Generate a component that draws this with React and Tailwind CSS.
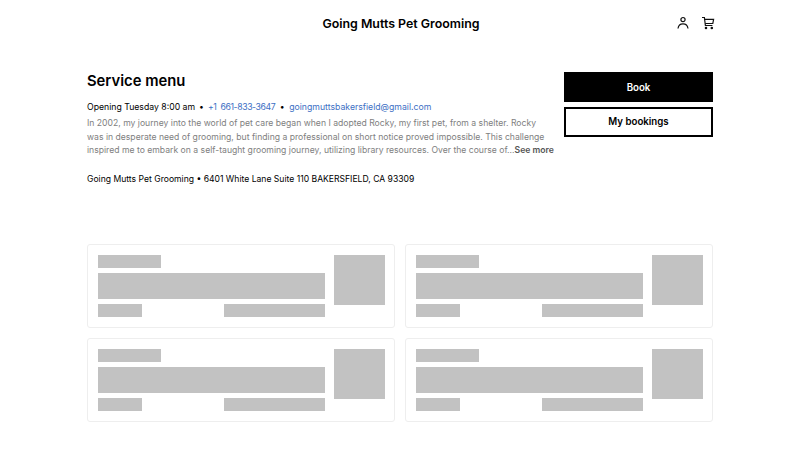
import React from 'react';

function SkeletonCard() {
  return (
    <div className="h-[84px] rounded-[3px] border border-[#eeeeee] bg-white pl-[10px] pr-[9px] pt-[10px] flex justify-between">
      <div className="w-[227px] flex flex-col">
        <div className="w-[63px] h-[13px] bg-[#c2c2c2]" />
        <div className="mt-[5px] h-[26px] bg-[#c2c2c2]" />
        <div className="mt-[5px] flex justify-between">
          <div className="w-[44px] h-[13px] bg-[#c2c2c2]" />
          <div className="w-[101px] h-[13px] bg-[#c2c2c2]" />
        </div>
      </div>
      <div className="w-[51px] h-[50px] bg-[#c2c2c2]" />
    </div>
  );
}

export default function App() {
  return (
    <div className="w-[800px] h-[450px] overflow-hidden bg-white font-['Inter',sans-serif] text-black">
      {/* Header */}
      <header className="h-[48px] pl-[87px] pr-[85px] grid grid-cols-[1fr_auto_1fr] items-center">
        <div />
        <h1 className="pt-[1px] text-[12.4px] font-semibold leading-none">Going Mutts Pet Grooming</h1>
        <div className="flex items-center justify-end gap-[11px] -mt-[3px]">
          <svg width="14" height="14" viewBox="0 0 14 14" fill="none" stroke="#111" strokeWidth="1.2">
            <circle cx="7" cy="3.6" r="2.1" />
            <path d="M2 12.5c.4-3 2.4-4.6 5-4.6s4.600 1.600 5 4.600" />
          </svg>
          <svg width="14" height="14" viewBox="0 0 14 14" fill="none" stroke="#111" strokeWidth="1.2">
            <path d="M1 1.500h2.400l1 8h7" />
            <path d="M3.600 3.300h9l-.8 4.200H4.200" />
            <circle cx="5" cy="12" r=".7" fill="#111" />
            <circle cx="10.800" cy="12" r=".7" fill="#111" />
          </svg>
        </div>
      </header>

      {/* Intro */}
      <section className="mt-[24px] pl-[87px] pr-[87px] flex justify-between h-[172px]">
        <div className="w-[470px]">
          <h2 className="text-[14.800px] font-semibold leading-[18px]">Service menu</h2>
          <p className="mt-[11px] text-[8.700px] leading-[12px] flex whitespace-pre">
            <span>Opening Tuesday 8:00 am</span>
            <span className="mx-[4px]">•</span>
            <span className="text-[#3d6fc4] tracking-[-0.4px] [word-spacing:2px]">+1 661-833-3647</span>
            <span className="mx-[4.500px]">•</span>
            <span className="text-[#3d6fc4]">goingmuttsbakersfield@gmail.com</span>
          </p>
          <p className="mt-[4px] text-[8.650px] leading-[13.500px] text-[#808080] whitespace-nowrap">
            In 2002, my journey into the world of pet care began when I adopted Rocky, my first pet, from a shelter. Rocky<br />
            was in desperate need of grooming, but finding a professional on short notice proved impossible. This challenge<br />
            inspired me to embark on a self-taught grooming journey, utilizing library resources. Over the course of...<span className="font-semibold text-[#555555]">See more</span>
          </p>
          <p className="mt-[15px] text-[8.600px] leading-[12px]">Going Mutts Pet Grooming • 6401 White Lane Suite 110 BAKERSFIELD, CA 93309</p>
        </div>
        <div className="w-[149px] flex flex-col gap-[5px]">
          <button className="h-[30px] pt-[2px] bg-black text-white text-[9.700px] font-semibold">Book</button>
          <button className="h-[30px] border-2 border-black bg-white text-[9.700px] font-semibold">My bookings</button>
        </div>
      </section>

      {/* Loading placeholders */}
      <section className="pl-[87px] pr-[87px] grid grid-cols-2 gap-x-[10px] gap-y-[10px]">
        <SkeletonCard />
        <SkeletonCard />
        <SkeletonCard />
        <SkeletonCard />
      </section>
    </div>
  );
}
